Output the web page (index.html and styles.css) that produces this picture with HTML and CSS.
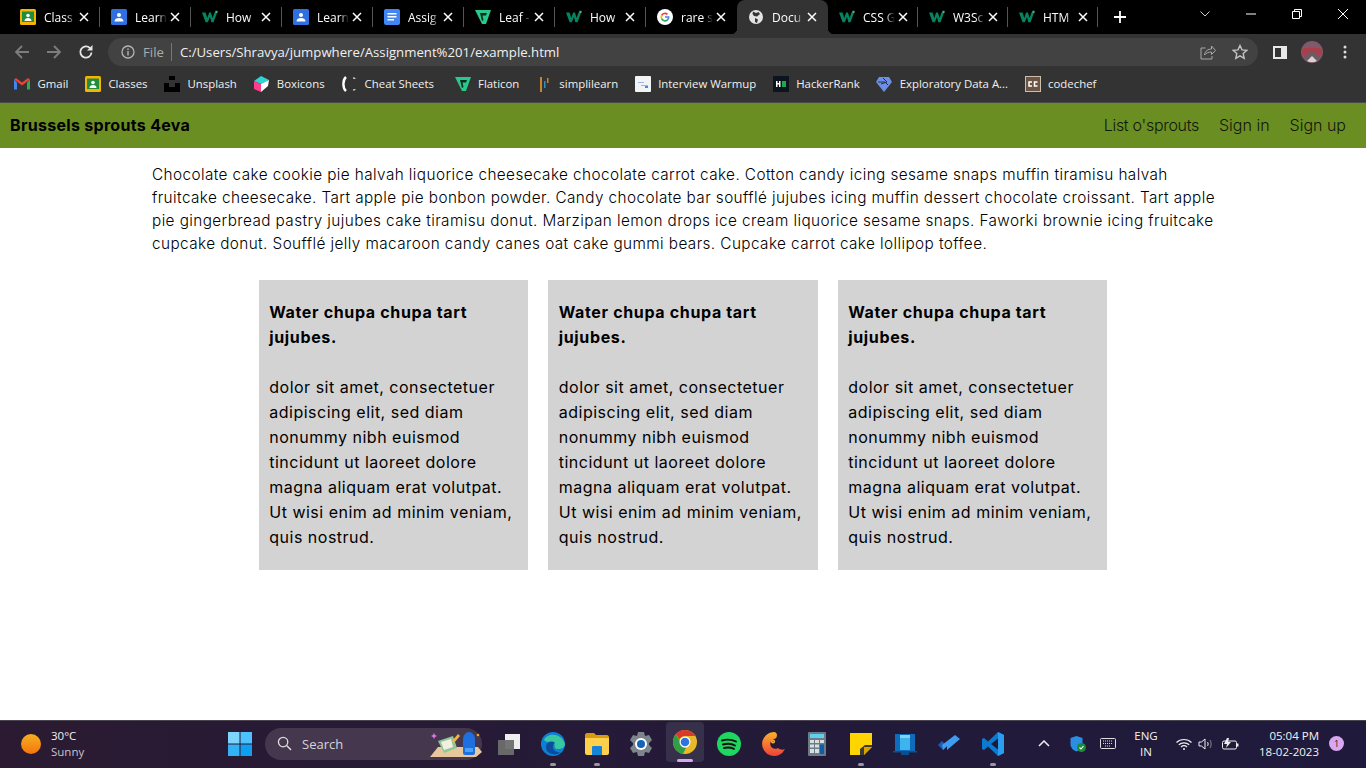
FILE: index.html
```html
<!DOCTYPE html>
<html lang="en">
<head>
    <meta charset="UTF-8">
    <title>Document</title>
    <link rel="stylesheet" href="styles.css">
</head>
<body>
    <svg class="defs" width="0" height="0">
        <defs><linearGradient id="crust" x1="0" y1="0" x2="0" y2="1"><stop offset="0" stop-color="#fbb02a"/><stop offset="1" stop-color="#f0403a"/></linearGradient></defs>
        <symbol id="w3" viewBox="0 0 18 14"><path d="M0 2h4l2 6 2-6h2l2 6 2-6h3l-4 11h-2.500L9 7l-2.500 6H4z" fill="#04845f"/><path d="M15 0h2.500v2.500H15z" fill="#3fb58f"/></symbol>
        <symbol id="classroom" viewBox="0 0 16 16"><rect width="16" height="16" rx="1.500" fill="#f4b400"/><rect x="2" y="2.500" width="12" height="10.500" fill="#1e8e3e"/><circle cx="8" cy="6.500" r="1.800" fill="#fff"/><path d="M4.500 12c0-2 1.500-3 3.500-3s3.500 1 3.500 3z" fill="#fff"/></symbol>
        <symbol id="learn" viewBox="0 0 16 16"><rect width="16" height="16" rx="1.500" fill="#2f6fe0"/><circle cx="8" cy="6" r="2" fill="#fff"/><path d="M3.500 12.500c0-2.500 2-3.500 4.500-3.500s4.500 1 4.500 3.500z" fill="#fff"/></symbol>
        <symbol id="leaf" viewBox="0 0 16 16"><path d="M0 1h16l-5 14H7z" fill="#29c98c"/><path d="M5 4h7l-1 2.500H7.500L8.500 11 7 12z" fill="#0c2c22"/></symbol>
        <symbol id="x" viewBox="0 0 10 10"><path d="M1 1l8 8M9 1l-8 8" stroke="#fff" stroke-width="1.500" fill="none"/></symbol>
    </svg>

    <div class="tabstrip">
        <div class="tab"><svg class="favicon"><use href="#classroom"/></svg><span class="tab-title">Class</span><svg class="tab-close"><use href="#x"/></svg></div>
        <div class="tab"><svg class="favicon"><use href="#learn"/></svg><span class="tab-title">Learn</span><svg class="tab-close"><use href="#x"/></svg></div>
        <div class="tab"><svg class="favicon"><use href="#w3"/></svg><span class="tab-title">How</span><svg class="tab-close"><use href="#x"/></svg></div>
        <div class="tab"><svg class="favicon"><use href="#learn"/></svg><span class="tab-title">Learn</span><svg class="tab-close"><use href="#x"/></svg></div>
        <div class="tab"><svg class="favicon" viewBox="0 0 16 16"><rect width="16" height="16" rx="2" fill="#4285f4"/><path d="M3.500 4h9v1.500h-9zM3.500 7h9v1.500h-9zM3.500 10h6.500v1.500H3.500z" fill="#fff"/></svg><span class="tab-title">Assig</span><svg class="tab-close"><use href="#x"/></svg></div>
        <div class="tab"><svg class="favicon"><use href="#leaf"/></svg><span class="tab-title">Leaf -</span><svg class="tab-close"><use href="#x"/></svg></div>
        <div class="tab"><svg class="favicon"><use href="#w3"/></svg><span class="tab-title">How</span><svg class="tab-close"><use href="#x"/></svg></div>
        <div class="tab tab-last"><svg class="favicon" viewBox="0 0 16 16"><circle cx="8" cy="8" r="8" fill="#fff"/><path d="M8 3.500a4.500 4.500 0 0 1 3 1.200l-1.200 1.200A2.800 2.800 0 0 0 5.300 7L3.900 6A4.500 4.500 0 0 1 8 3.500z" fill="#ea4335"/><path d="M3.900 6l1.400 1a2.800 2.800 0 0 0 0 2l-1.400 1a4.500 4.500 0 0 1 0-4z" fill="#fbbc05"/><path d="M3.900 10l1.400-1a2.800 2.800 0 0 0 5 .8l1.400 1A4.500 4.500 0 0 1 3.900 10z" fill="#34a853"/><path d="M8 7.300h4.400a4.500 4.500 0 0 1-.7 3.500l-1.400-1c.3-.3.4-.6.500-1H8z" fill="#4285f4"/></svg><span class="tab-title">rare s</span><svg class="tab-close"><use href="#x"/></svg></div>
        <div class="tab tab-active"><svg class="favicon" viewBox="0 0 16 16"><circle cx="8" cy="8" r="7" fill="#e3e3e3"/><path d="M5 2.500l3 1.500 2.500-1 1.500 2-3 2.500-3-.5-1.500-2zM7 9l3 1.500-1 3.500-2-1z" fill="#353535"/></svg><span class="tab-title">Docu</span><svg class="tab-close"><use href="#x"/></svg></div>
        <div class="tab tab-narrow"><svg class="favicon"><use href="#w3"/></svg><span class="tab-title">CSS G</span><svg class="tab-close"><use href="#x"/></svg></div>
        <div class="tab tab-narrow"><svg class="favicon"><use href="#w3"/></svg><span class="tab-title">W3Sc</span><svg class="tab-close"><use href="#x"/></svg></div>
        <div class="tab tab-narrow"><svg class="favicon"><use href="#w3"/></svg><span class="tab-title">HTM</span><svg class="tab-close"><use href="#x"/></svg></div>
        <svg class="new-tab" viewBox="0 0 12 12"><path d="M6 0v12M0 6h12" stroke="#fff" stroke-width="1.800"/></svg>
        <div class="window-btns">
            <svg class="win-chevron" viewBox="0 0 10 6"><path d="M.5.500L5 5 9.500.500" stroke="#ccc" fill="none"/></svg>
            <svg class="win-btn" viewBox="0 0 10 10"><path d="M0 5h10" stroke="#fff"/></svg>
            <svg class="win-btn" viewBox="0 0 10 10"><path d="M.5 2.500h7v7h-7zM2.500 2.500v-2h7v7h-2" stroke="#fff" fill="none"/></svg>
            <svg class="win-btn" viewBox="0 0 10 10"><path d="M0 0l10 10M10 0L0 10" stroke="#fff"/></svg>
        </div>
    </div>

    <div class="toolbar">
        <svg class="tool-icon" viewBox="0 0 16 16"><path d="M15 8H2M8 2L2 8l6 6" stroke="#7d7d7d" stroke-width="1.800" fill="none"/></svg>
        <svg class="tool-icon" viewBox="0 0 16 16"><path d="M1 8h13M8 2l6 6-6 6" stroke="#7d7d7d" stroke-width="1.800" fill="none"/></svg>
        <svg class="tool-icon" viewBox="0 0 16 16"><path d="M13.500 8.500A5.600 5.600 0 1 1 12 4.200" stroke="#e6e6e6" stroke-width="1.800" fill="none"/><path d="M14.500 1v5.500H9z" fill="#e6e6e6"/></svg>
        <div class="omnibox">
            <svg class="info-icon" viewBox="0 0 14 14"><circle cx="7" cy="7" r="6" stroke="#b5b5b5" stroke-width="1.300" fill="none"/><path d="M7 6v4.500M7 3.500v1.500" stroke="#b5b5b5" stroke-width="1.400"/></svg>
            <span class="scheme">File</span>
            <span class="url">C:/Users/Shravya/jumpwhere/Assignment%201/example.html</span>
            <svg class="omni-icon share" viewBox="0 0 16 16"><path d="M5.500 4H1v11h11v-3" stroke="#a8a8a8" fill="none"/><path d="M4.500 11c.5-4 3.500-6 7-6V2l4 4.500-4 4V8c-3 0-5.500 1-7 3z" stroke="#a8a8a8" fill="none"/></svg>
            <svg class="omni-icon" viewBox="0 0 16 16"><path d="M8 1.500l2 4.400 4.700.5-3.500 3.200 1 4.700L8 11.900l-4.200 2.400 1-4.700L1.300 6.400 6 5.900z" stroke="#c4c4c4" stroke-width="1.400" fill="none"/></svg>
        </div>
        <svg class="panel-icon" viewBox="0 0 14 13"><path d="M0 0h14v13H0z" fill="#e8e8e8"/><path d="M2 2h6v9H2z" fill="#333"/></svg>
        <svg class="avatar" viewBox="0 0 22 22"><circle cx="11" cy="11" r="11" fill="#82586a"/><path d="M1 8c5-2 14-2 20 0v6H1z" fill="#a8404c"/><path d="M2 16l9-6 9 6a11 11 0 0 1-18 0z" fill="#6d5a62"/><path d="M6 20l5-5 5 5a11 11 0 0 1-10 0z" fill="#d8d2d2"/></svg>
        <svg class="menu-icon" viewBox="0 0 4 14"><circle cx="2" cy="2" r="1.500" fill="#ddd"/><circle cx="2" cy="7" r="1.500" fill="#ddd"/><circle cx="2" cy="12" r="1.500" fill="#ddd"/></svg>
    </div>

    <div class="bookmarks">
        <div class="bookmark"><svg class="favicon" viewBox="0 0 16 13"><path d="M0 2v10h3V5z" fill="#4285f4"/><path d="M16 2v10h-3V5z" fill="#34a853"/><path d="M0 2l8 6 8-6-2-1.500L8 5 2 .5z" fill="#ea4335"/></svg>Gmail</div>
        <div class="bookmark"><svg class="favicon"><use href="#classroom"/></svg>Classes</div>
        <div class="bookmark"><svg class="favicon" viewBox="0 0 16 16"><path d="M5 0h6v4H5z" fill="#000"/><path d="M0 7h5v4h6V7h5v9H0z" fill="#000"/></svg>Unsplash</div>
        <div class="bookmark"><svg class="favicon" viewBox="0 0 16 16"><path d="M8 0l8 4-8 4-7-3z" fill="#2fd4d4"/><path d="M1 5l7 3v8l-7-3z" fill="#ff3d8b"/><path d="M8 8l8-4-1 6-7 6z" fill="#fff"/></svg>Boxicons</div>
        <div class="bookmark bookmark-wide"><svg class="favicon" viewBox="0 0 16 16"><path d="M5 1C1.500 4 1.500 12 5 15" stroke="#fff" stroke-width="2.400" fill="none"/><path d="M12 2c1.500 0 2 .5 2 1M14 13c0 .6-.6 1-2 1" stroke="#ccc" stroke-width="1.500" fill="none"/></svg>Cheat Sheets</div>
        <div class="bookmark"><svg class="favicon"><use href="#leaf"/></svg>Flaticon</div>
        <div class="bookmark"><svg class="favicon" viewBox="0 0 16 16"><path d="M4 1h2v15H4z" fill="#c9852b"/><path d="M8 5h1.500v7H8z" fill="#2a8fc2"/><path d="M11 2h1.500v5H11z" fill="#c9852b"/></svg>simplilearn</div>
        <div class="bookmark"><svg class="favicon" viewBox="0 0 16 16"><rect width="16" height="16" rx="1" fill="#f1f3f4"/><path d="M3 6h6v1H3zM6 9h7v1H6z" fill="#9ab6e8"/><path d="M10 10h3v2h-3z" fill="#4285f4"/></svg>Interview Warmup</div>
        <div class="bookmark"><svg class="favicon" viewBox="0 0 16 16"><rect width="16" height="16" fill="#0e141e"/><path d="M3 5h1.500v2h1.500V5h1.500v6H6V8.500H4.500V11H3z" fill="#fff"/><path d="M9 5h4v6H9z" fill="#1ba94c"/></svg>HackerRank</div>
        <div class="bookmark"><svg class="favicon" viewBox="0 0 16 16"><path d="M3 1h10l3 5-8 10L0 6z" fill="#6d8fe8"/><path d="M2 6h7l3 3M7 2l4 4-6 2" stroke="#2e2e2e" fill="none"/></svg>Exploratory Data A...</div>
        <div class="bookmark"><svg class="favicon" viewBox="0 0 16 16"><rect width="16" height="16" fill="#6b5443"/><rect x=".5" y=".5" width="15" height="15" fill="none" stroke="#cdbfae"/><path d="M7 6H4v4h3M12.500 6h-3v4h3" stroke="#fff" stroke-width="1.500" fill="none"/></svg>codechef</div>
    </div>

    <nav class="sitenav">
        <span class="brand">Brussels sprouts 4eva</span>
        <div class="nav-links">
            <a href="#" class="nav-list">List o'sprouts</a>
            <a href="#">Sign in</a>
            <a href="#">Sign up</a>
        </div>
    </nav>

    <main class="content">
        <p class="intro">Chocolate cake cookie pie halvah liquorice cheesecake chocolate carrot cake. Cotton candy icing sesame snaps muffin tiramisu halvah fruitcake cheesecake. Tart apple pie bonbon powder. Candy chocolate bar soufflé jujubes icing muffin dessert chocolate croissant. Tart apple pie gingerbread pastry jujubes cake tiramisu donut. Marzipan lemon drops ice cream liquorice sesame snaps. Faworki brownie icing fruitcake cupcake donut. Soufflé jelly macaroon candy canes oat cake gummi bears. Cupcake carrot cake lollipop toffee.</p>
        <div class="cards">
            <div class="card">
                <h4>Water chupa chupa tart jujubes.</h4>
                <p>dolor sit amet, consectetuer adipiscing elit, sed diam nonummy nibh euismod tincidunt ut laoreet dolore magna aliquam erat volutpat. Ut wisi enim ad minim veniam, quis nostrud.</p>
            </div>
            <div class="card">
                <h4>Water chupa chupa tart jujubes.</h4>
                <p>dolor sit amet, consectetuer adipiscing elit, sed diam nonummy nibh euismod tincidunt ut laoreet dolore magna aliquam erat volutpat. Ut wisi enim ad minim veniam, quis nostrud.</p>
            </div>
            <div class="card">
                <h4>Water chupa chupa tart jujubes.</h4>
                <p>dolor sit amet, consectetuer adipiscing elit, sed diam nonummy nibh euismod tincidunt ut laoreet dolore magna aliquam erat volutpat. Ut wisi enim ad minim veniam, quis nostrud.</p>
            </div>
        </div>
    </main>

    <footer class="taskbar">
        <div class="weather">
            <div class="sun"></div>
            <div class="weather-text"><span>30°C</span><span class="dim">Sunny</span></div>
        </div>
        <div class="task-center">
            <svg class="start" viewBox="0 0 24 24"><path d="M0 0h11.500v11.500H0z" fill="#7fd4fb"/><path d="M12.500 0H24v11.500H12.500z" fill="#4cc2ff"/><path d="M0 12.500h11.500V24H0z" fill="#33b1f5"/><path d="M12.500 12.500H24V24H12.500z" fill="#0f9ff0"/></svg>
            <div class="search">
                <svg class="search-icon" viewBox="0 0 16 16"><circle cx="6.500" cy="6.500" r="5" stroke="#ddd" stroke-width="1.400" fill="none"/><path d="M10.500 10.500L15 15" stroke="#ddd" stroke-width="1.600"/></svg>
                <span>Search</span>
                <svg class="search-art" viewBox="0 0 54 28"><path d="M2 27L10 17h40l4 5-6 5z" fill="#e8c79c"/><path d="M10 11l15-5 4 12-13 5z" fill="#8fc79a"/><path d="M13 12l10-3 2 8-9 3z" fill="#f3efe0"/><path d="M24 11l6-7 2 2-6 7z" fill="#f5b342"/><path d="M35 10c0-5 3-8 6-8s6 3 6 8v13c0 1-1 2-2 2h-8c-1 0-2-1-2-2z" fill="#1f6fe0"/><path d="M37 18h8v4h-8z" fill="#4aa0ff"/><path d="M6 3l1 2 2 1-2 1-1 2-1-2-2-1 2-1z" fill="#d777e8"/><circle cx="50" cy="5" r="1.300" fill="#f5a623"/></svg>
            </div>
            <div class="task-apps">
                <div class="app"><svg class="app-icon" viewBox="0 0 24 24"><path d="M8 2h15v15H8z" fill="#eee"/><path d="M1 8h16v15H1z" fill="#6d6d6d" fill-opacity=".95"/></svg></div>
                <div class="app app-open"><svg class="app-icon" viewBox="0 0 24 24"><circle cx="12" cy="12" r="12" fill="#0f7fd6"/><path d="M3 8C6 1 20 0 24 12c0 3-3 5-7 5-3 0-4-2-3-4-3-3-8-2-11-5z" fill="#37c8a0"/><path d="M5 15c0-5 6-7 9-4-2 1-3 4-1 7 2 2 5 3 7 2-4 4-15 3-15-5z" fill="#0a4d9c"/></svg></div>
                <div class="app app-open"><svg class="app-icon" viewBox="0 0 24 24"><path d="M0 3c0-1 1-2 2-2h7l2 2h11c1 0 2 1 2 2v3H0z" fill="#d99a0f"/><path d="M0 6h24v15c0 1-1 2-2 2H2c-1 0-2-1-2-2z" fill="#ffd04c"/><path d="M7 15c0-1 1-1 1-1h8s1 0 1 1v8H7z" fill="#1384d8"/></svg></div>
                <div class="app"><svg class="app-icon" viewBox="0 0 24 24"><path d="M9 0h6l1 4 4-1 3 5-3 3v2l3 3-3 5-4-1-1 4H9l-1-4-4 1-3-5 3-3v-2L1 8l3-5 4 1z" fill="#7d858c"/><circle cx="12" cy="12" r="6" fill="#fff"/><circle cx="12" cy="12" r="4" fill="#1565b8"/></svg></div>
                <div class="app app-active"><svg class="app-icon" viewBox="0 0 24 24"><circle cx="12" cy="12" r="12" fill="#e8b82a"/><path d="M12 0a12 12 0 0 1 10.400 6H12a6 6 0 0 0-5.500 3.500L2.800 4.300A12 12 0 0 1 12 0z" fill="#d93a2b"/><path d="M2.800 4.300L8 13a6 6 0 0 0 5 5l-3 5.800A12 12 0 0 1 2.800 4.300z" fill="#2f9e44"/><circle cx="12" cy="12" r="5.500" fill="#fff"/><circle cx="12" cy="12" r="4.300" fill="#2f73e0"/></svg></div>
                <div class="app"><svg class="app-icon" viewBox="0 0 24 24"><circle cx="12" cy="12" r="12" fill="#1ed760"/><path d="M5 8.500c5-1.500 10-1 14 1M6 12.500c4-1 9-.7 12 1M7 16c3-.7 7-.5 10 .8" stroke="#111" stroke-width="1.900" stroke-linecap="round" fill="none"/></svg></div>
                <div class="app"><svg class="app-icon" viewBox="0 0 24 24"><path d="M13 0a12 12 0 1 0 11 17c-2 1-5 1-7-1-1.500 1-3 1-4.500.5A5 5 0 0 1 13 7c1 0 3-1 3-4 0-1-1-3-3-3z" fill="url(#crust)"/><circle cx="12" cy="9.500" r="2" fill="#ffcf4a"/><circle cx="12" cy="9.500" r="1" fill="#e2571a"/></svg></div>
                <div class="app"><svg class="app-icon" viewBox="0 0 24 24"><rect x="3" width="18" height="24" rx="1" fill="#6d7b86"/><path d="M5 2h14v4H5z" fill="#5ed0ee"/><path d="M5 8h4v3H5zM10 8h4v3h-4zM15 8h4v3h-4zM5 12.500h4v3H5zM10 12.500h4v3h-4zM5 17h4v4H5zM10 17h4v4h-4z" fill="#d8dde0"/><path d="M15 12.500h4V22h-4z" fill="#0f5ea8"/></svg></div>
                <div class="app app-open"><svg class="app-icon" viewBox="0 0 24 24"><path d="M1 1h22v14l-8 8H1z" fill="#ffd400"/><path d="M23 13v2l-8 8h-4V17l5-4z" fill="#3a3a3a"/><path d="M15 23l8-8h-8z" fill="#d9a400"/></svg></div>
                <div class="app"><svg class="app-icon" viewBox="0 0 24 24"><path d="M2 2h20v17H2z" fill="#0f6cbd"/><path d="M0 19h24v1.500H0zM8 20h8v3H8z" fill="#0a4f8f"/><path d="M7 3h10v15H7z" fill="#3db4ee"/><path d="M7 3h10v3H7z" fill="#7ed5f7"/></svg></div>
                <div class="app"><svg class="app-icon" viewBox="0 0 24 24"><path d="M1 13l4-4 5 5-4 4z" fill="#1a5fb4"/><path d="M10 14L6 18 5 13 18 3l5 4-13 11z" fill="#3f9cf0"/></svg></div>
                <div class="app app-open"><svg class="app-icon" viewBox="0 0 24 24"><path d="M17 0l6 3v18l-6 3-10-9.500L3 18l-2-1V7l2-1 4 3.500z" fill="#0b7ad1"/><path d="M17 6.500L10 12l7 5.500z" fill="#1e1a36"/><path d="M17 0l6 3v18l-6 3z" fill="#2a9df0"/></svg></div>
            </div>
        </div>
        <div class="tray">
            <svg class="tray-chevron" viewBox="0 0 12 7"><path d="M1 6l5-5 5 5" stroke="#eee" stroke-width="1.500" fill="none"/></svg>
            <svg class="tray-shield" viewBox="0 0 16 16"><path d="M6.500 0l6 2v6c0 4-3 6.500-6 7.500-3-1-6-3.500-6-7.500V2z" fill="#2a8fe0"/><circle cx="11.500" cy="11.500" r="4.500" fill="#1b8a3a"/><path d="M9.500 11.500l1.500 1.500 2.500-3" stroke="#fff" stroke-width="1.100" fill="none"/></svg>
            <svg class="tray-keyboard" viewBox="0 0 16 11"><rect x=".5" y=".5" width="15" height="10" rx="1" stroke="#ddd" fill="none"/><path d="M3 3h10M3 5.500h10M5 8h6" stroke="#ddd" stroke-dasharray="1 1"/></svg>
            <div class="tray-lang"><span>ENG</span><span>IN</span></div>
            <svg class="tray-wifi" viewBox="0 0 16 12"><path d="M.5 4.500c4-4 11-4 15 0M2.800 6.800c3-2.700 7.400-2.700 10.400 0M5 9c1.700-1.500 4.300-1.500 6 0" stroke="#eee" stroke-width="1.200" fill="none"/><circle cx="8" cy="11" r="1" fill="#eee"/></svg>
            <svg class="tray-volume" viewBox="0 0 16 14"><path d="M1 5h2.500L7 2v10L3.500 9H1z" stroke="#eee" fill="none"/><path d="M9.500 5c.8 1 .8 3 0 4" stroke="#eee" fill="none"/><path d="M12 3c1.500 2 1.500 6 0 8" stroke="#888" fill="none"/></svg>
            <svg class="tray-battery" viewBox="0 0 17 12"><rect x=".5" y="3" width="14" height="8" rx="1.500" stroke="#eee" fill="none"/><path d="M15 5.500h1.500v3H15z" fill="#eee"/><path d="M5 0L2 6h3l-1 4 5-6H6l1-4z" fill="#eee"/></svg>
            <div class="tray-clock"><span>05:04 PM</span><span>18-02-2023</span></div>
            <div class="notif-badge">1</div>
        </div>
    </footer>
</body>
</html>
```

FILE: styles.css
```css
html, body {
    margin: 0;
    padding: 0;
}
body {
    width: 1366px;
    height: 768px;
    overflow: hidden;
    display: flex;
    flex-direction: column;
    font-family: "Inter", sans-serif;
    background-color: #fff;
    color: #000;
}
.defs {
    position: absolute;
}

/* browser chrome */
.tabstrip {
    height: 34px;
    background-color: #000;
    display: flex;
    align-items: center;
    padding-left: 9px;
    flex-shrink: 0;
}
.tab {
    width: 91px;
    height: 34px;
    box-sizing: border-box;
    display: flex;
    align-items: center;
    padding: 0 10px 0 11px;
    color: #fff;
    font-family: "Open Sans", sans-serif;
    font-size: 12px;
    position: relative;
}
/* short separator between tabs */
.tab::after {
    content: "";
    position: absolute;
    right: 0;
    top: 7px;
    height: 20px;
    width: 1px;
    background-color: #555;
}
.tab-last::after {
    display: none;
}
.tab-narrow {
    width: 90px;
}
.tab-active {
    background-color: #333;
    border-radius: 8px 8px 0 0;
}
/* flared bottom corners of the open tab */
.tab-active::before, .tab-active::after {
    content: "";
    position: absolute;
    top: auto;
    bottom: 0;
    width: 6px;
    height: 6px;
}
.tab-active::before {
    left: -6px;
    background: radial-gradient(circle at 0 0, #000 6px, #333 6.500px);
}
.tab-active::after {
    right: -6px;
    background: radial-gradient(circle at 100% 0, #000 6px, #333 6.500px);
}
.favicon {
    width: 16px;
    height: 16px;
    flex-shrink: 0;
}
.tab-title {
    margin-left: 8px;
    width: 32px;
    white-space: nowrap;
    flex-shrink: 0;
    -webkit-mask-image: linear-gradient(to right, #000 70%, transparent);
    mask-image: linear-gradient(to right, #000 70%, transparent);
}
.tab-close {
    width: 10px;
    height: 10px;
    margin-left: 3px;
    flex-shrink: 0;
}
.new-tab {
    width: 12px;
    height: 12px;
    margin-left: 16px;
}
.window-btns {
    margin-left: auto;
    display: flex;
    align-items: center;
    height: 28px;
    margin-bottom: 6px;
}
.win-chevron {
    width: 10px;
    height: 6px;
    margin-right: 36px;
}
.win-btn {
    width: 10px;
    height: 10px;
    margin-right: 36px;
}
.win-btn:last-child {
    margin-right: 18px;
}

.toolbar {
    padding: 4px 0 0;
    height: 28px;
    background-color: #333;
    display: flex;
    align-items: center;
    flex-shrink: 0;
}
.tool-icon {
    width: 16px;
    height: 16px;
    margin-left: 14px;
    margin-right: 2px;
}
.omnibox {
    width: 1150px;
    height: 28px;
    margin-left: 12px;
    border-radius: 14px;
    background-color: #424242;
    display: flex;
    align-items: center;
    padding-left: 13px;
    box-sizing: border-box;
    font-family: "Open Sans", sans-serif;
}
.info-icon {
    width: 14px;
    height: 14px;
}
.scheme {
    color: #ababab;
    margin-left: 8px;
    padding-right: 7px;
    border-right: 1px solid #777;
    line-height: 18px;
    font-size: 13.200px;
}
.url {
    color: #f0f0f0;
    margin-left: 8px;
    font-size: 13.200px;
}
.omni-icon {
    width: 16px;
    height: 16px;
    margin-right: 10px;
}
.share {
    margin-left: auto;
    margin-right: 16px;
}
.panel-icon {
    width: 14px;
    height: 13px;
    margin-left: 15px;
}
.avatar {
    width: 22px;
    height: 22px;
    margin-left: 14px;
}
.menu-icon {
    width: 4px;
    height: 14px;
    margin-left: 20px;
}

.bookmarks {
    padding-bottom: 1px;
    box-sizing: border-box;
    height: 37px;
    background-color: #333;
    border-bottom: 1px solid #4a4a4a;
    display: flex;
    align-items: center;
    padding-left: 14px;
    color: #f0f0f0;
    font-family: "Open Sans", sans-serif;
    font-size: 11.400px;
    flex-shrink: 0;
}
.bookmark {
    display: flex;
    align-items: center;
    gap: 7.500px;
    margin-right: 16.500px;
    white-space: nowrap;
}
.bookmark-wide {
    margin-right: 20.500px;
}

/* the page itself */
.sitenav {
    height: 45px;
    background-color: #6b8e23;
    display: flex;
    align-items: center;
    justify-content: space-between;
    padding: 0 20px 2px 10px;
    box-sizing: border-box;
    flex-shrink: 0;
}
.brand {
    font-weight: 700;
    font-size: 16px;
    letter-spacing: .3px;
}
.nav-links {
    display: flex;
    gap: 20px;
}
.nav-links a {
    color: #10180a;
    text-decoration: none;
    font-size: 16px;
    font-weight: 300;
}
.nav-links .nav-list {
    letter-spacing: -.3px;
}
.content {
    flex: 1;
    padding: 15px 152px 0;
}
.intro {
    margin: 0;
    font-size: 15.300px;
    font-weight: 350;
    line-height: 23px;
    letter-spacing: .42px;
    width: 1065px;
}
.cards {
    display: flex;
    justify-content: center;
    gap: 20px;
    margin-top: 25px;
}
.card {
    width: 269.500px;
    height: 290px;
    box-sizing: border-box;
    padding: 20px 10px 0 10.500px;
    background-color: #d3d3d3;
    font-size: 16px;
    line-height: 25px;
    letter-spacing: .5px;
    font-weight: 370;
}
.card h4 {
    margin: 0 0 25px;
    font-size: 16px;
    font-weight: 700;
    letter-spacing: .65px;
}
.card p {
    margin: 0;
}

/* windows taskbar */
.taskbar {
    height: 48px;
    background: linear-gradient(to right, #2b1a32, #241a38 50%, #1f1a3c);
    border-top: 1px solid #4a4350;
    padding-bottom: 2px;
    box-sizing: border-box;
    display: flex;
    align-items: center;
    color: #f2f2f2;
    font-family: "Open Sans", sans-serif;
    font-size: 11.500px;
    flex-shrink: 0;
}
.weather {
    display: flex;
    align-items: center;
    width: 228px;
    padding-left: 21px;
    box-sizing: border-box;
    gap: 10px;
}
.sun {
    width: 20px;
    height: 20px;
    border-radius: 50%;
    background: linear-gradient(to bottom, #f5b01e, #f5740f);
}
.weather-text, .tray-lang, .tray-clock {
    display: flex;
    flex-direction: column;
    line-height: 16px;
}
.dim {
    color: #c8c4cc;
}
.task-center {
    display: flex;
    align-items: center;
}
.start {
    width: 24px;
    height: 24px;
}
.search {
    width: 217px;
    height: 32px;
    margin-left: 13px;
    border-radius: 16px;
    background-color: #45384e;
    display: flex;
    align-items: center;
    padding-left: 12px;
    box-sizing: border-box;
    font-size: 13px;
    color: #d8d4dc;
    position: relative;
}
.search-icon {
    width: 15px;
    height: 15px;
    margin-right: 10px;
}
.search-art {
    position: absolute;
    right: 0;
    top: 2px;
    width: 54px;
    height: 28px;
}
.task-apps {
    display: flex;
    margin-left: 5px;
}
.app {
    width: 44px;
    height: 44px;
    display: flex;
    align-items: center;
    justify-content: center;
    position: relative;
}
.app-icon {
    width: 24px;
    height: 24px;
}
.app-open::after {
    content: "";
    position: absolute;
    bottom: 0;
    left: 19px;
    width: 6px;
    height: 3px;
    border-radius: 2px;
    background-color: #9a96a0;
}
.app-active {
    background-color: #37304a;
    border-radius: 4px;
    width: 38px;
    height: 40px;
    margin: 0 3px;
}
.app-active::after {
    content: "";
    position: absolute;
    bottom: 0;
    left: 11px;
    width: 16px;
    height: 3px;
    border-radius: 2px;
    background-color: #d9a7f0;
}
.tray {
    flex: 1;
    display: flex;
    align-items: center;
    padding-left: 23px;
}
.tray-chevron {
    width: 12px;
    height: 7px;
}
.tray-shield {
    width: 16px;
    height: 16px;
    margin-left: 20px;
}
.tray-keyboard {
    width: 16px;
    height: 11px;
    margin-left: 14px;
}
.tray-lang {
    margin-left: 17px;
    align-items: center;
    width: 26px;
}
.tray-wifi {
    width: 16px;
    height: 12px;
    margin-left: 17px;
}
.tray-volume {
    width: 16px;
    height: 14px;
    margin-left: 6px;
}
.tray-battery {
    width: 17px;
    height: 12px;
    margin-left: 8px;
}
.tray-clock {
    align-items: flex-end;
    margin-left: 18px;
    width: 62px;
}
.notif-badge {
    width: 15px;
    height: 15px;
    border-radius: 50%;
    background-color: #d9a7f0;
    color: #222;
    font-size: 9px;
    text-align: center;
    line-height: 15px;
    margin-left: 10px;
}
```
